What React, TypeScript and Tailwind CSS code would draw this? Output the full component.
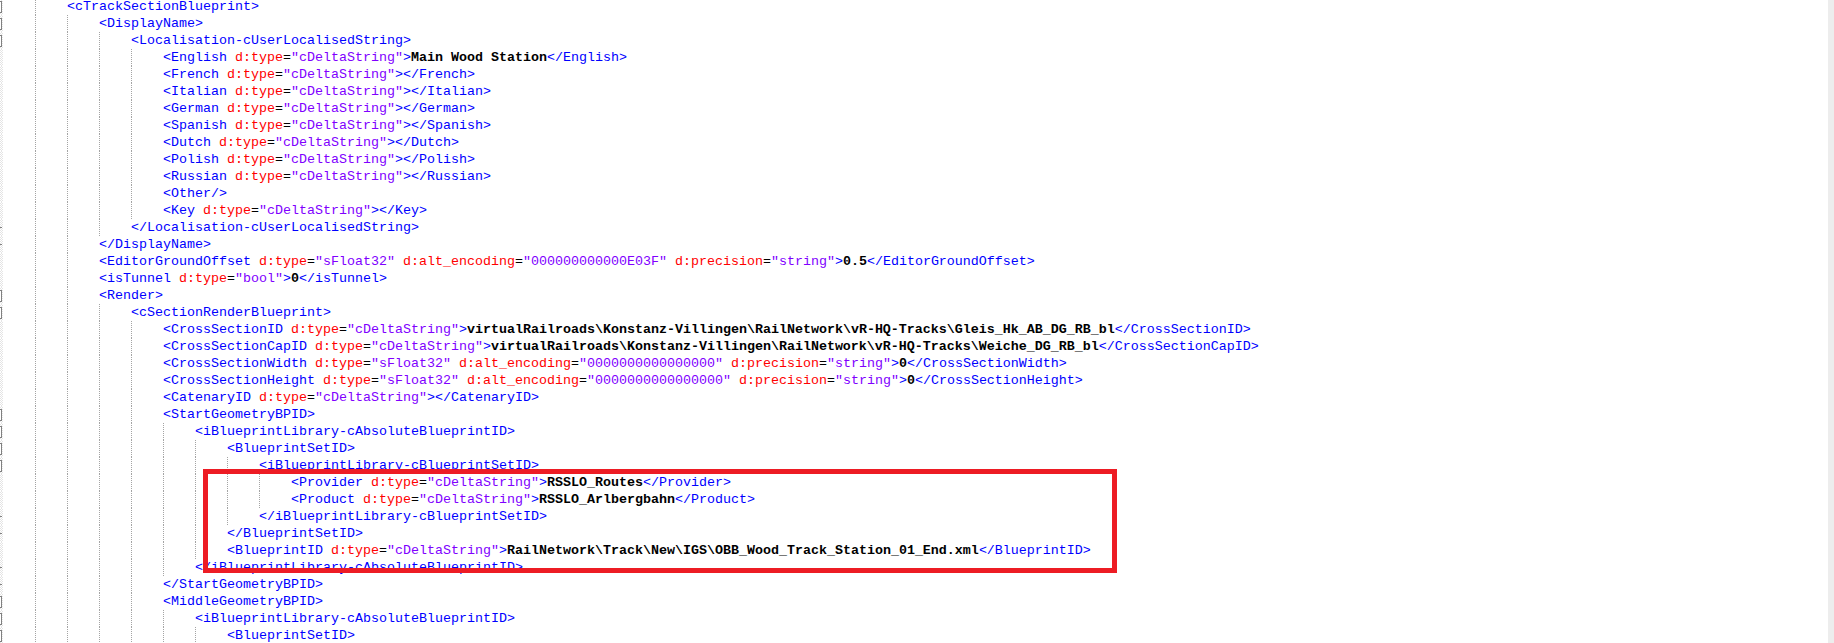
import React from "react";

type Marker = "box" | "tick" | null;
type Kind = "tag" | "attr" | "eq" | "val" | "text" | "sp";

const LINES: [number, string, Marker][] = [
  [2, "<cTrackSectionBlueprint>", "box"],
  [3, "<DisplayName>", "box"],
  [4, "<Localisation-cUserLocalisedString>", "box"],
  [5, '<English d:type="cDeltaString">Main Wood Station</English>', null],
  [5, '<French d:type="cDeltaString"></French>', null],
  [5, '<Italian d:type="cDeltaString"></Italian>', null],
  [5, '<German d:type="cDeltaString"></German>', null],
  [5, '<Spanish d:type="cDeltaString"></Spanish>', null],
  [5, '<Dutch d:type="cDeltaString"></Dutch>', null],
  [5, '<Polish d:type="cDeltaString"></Polish>', null],
  [5, '<Russian d:type="cDeltaString"></Russian>', null],
  [5, "<Other/>", null],
  [5, '<Key d:type="cDeltaString"></Key>', null],
  [4, "</Localisation-cUserLocalisedString>", "tick"],
  [3, "</DisplayName>", "tick"],
  [3, '<EditorGroundOffset d:type="sFloat32" d:alt_encoding="000000000000E03F" d:precision="string">0.5</EditorGroundOffset>', null],
  [3, '<isTunnel d:type="bool">0</isTunnel>', null],
  [3, "<Render>", "box"],
  [4, "<cSectionRenderBlueprint>", "box"],
  [5, '<CrossSectionID d:type="cDeltaString">virtualRailroads\\Konstanz-Villingen\\RailNetwork\\vR-HQ-Tracks\\Gleis_Hk_AB_DG_RB_bl</CrossSectionID>', null],
  [5, '<CrossSectionCapID d:type="cDeltaString">virtualRailroads\\Konstanz-Villingen\\RailNetwork\\vR-HQ-Tracks\\Weiche_DG_RB_bl</CrossSectionCapID>', null],
  [5, '<CrossSectionWidth d:type="sFloat32" d:alt_encoding="0000000000000000" d:precision="string">0</CrossSectionWidth>', null],
  [5, '<CrossSectionHeight d:type="sFloat32" d:alt_encoding="0000000000000000" d:precision="string">0</CrossSectionHeight>', null],
  [5, '<CatenaryID d:type="cDeltaString"></CatenaryID>', null],
  [5, "<StartGeometryBPID>", "box"],
  [6, "<iBlueprintLibrary-cAbsoluteBlueprintID>", "box"],
  [7, "<BlueprintSetID>", "box"],
  [8, "<iBlueprintLibrary-cBlueprintSetID>", "box"],
  [9, '<Provider d:type="cDeltaString">RSSLO_Routes</Provider>', null],
  [9, '<Product d:type="cDeltaString">RSSLO_Arlbergbahn</Product>', null],
  [8, "</iBlueprintLibrary-cBlueprintSetID>", "tick"],
  [7, "</BlueprintSetID>", "tick"],
  [7, '<BlueprintID d:type="cDeltaString">RailNetwork\\Track\\New\\IGS\\OBB_Wood_Track_Station_01_End.xml</BlueprintID>', null],
  [6, "</iBlueprintLibrary-cAbsoluteBlueprintID>", "tick"],
  [5, "</StartGeometryBPID>", "tick"],
  [5, "<MiddleGeometryBPID>", "box"],
  [6, "<iBlueprintLibrary-cAbsoluteBlueprintID>", "box"],
  [7, "<BlueprintSetID>", "box"],
];

const CLS: Record<Kind, string> = {
  tag: "text-[#0000ff]",
  attr: "text-[#ff0000]",
  eq: "text-black",
  val: "text-[#8000ff]",
  text: "text-black font-bold",
  sp: "",
};

function tokenize(s: string): { t: string; k: Kind }[] {
  const out: { t: string; k: Kind }[] = [];
  let i = 0;
  while (i < s.length) {
    if (s[i] === "<") {
      let j = i + 1;
      if (s[j] === "/") j++;
      while (j < s.length && s[j] !== " " && s[j] !== ">" && s[j] !== "/") j++;
      out.push({ t: s.slice(i, j), k: "tag" });
      i = j;
      while (i < s.length) {
        if (s[i] === " ") {
          out.push({ t: " ", k: "sp" });
          i++;
        } else if (s[i] === ">") {
          out.push({ t: ">", k: "tag" });
          i++;
          break;
        } else if (s[i] === "/" && s[i + 1] === ">") {
          out.push({ t: "/>", k: "tag" });
          i += 2;
          break;
        } else {
          let j2 = i;
          while (j2 < s.length && s[j2] !== "=") j2++;
          out.push({ t: s.slice(i, j2), k: "attr" });
          out.push({ t: "=", k: "eq" });
          let j3 = j2 + 2;
          while (j3 < s.length && s[j3] !== '"') j3++;
          out.push({ t: s.slice(j2 + 1, j3 + 1), k: "val" });
          i = j3 + 1;
        }
      }
    } else {
      let j = i;
      while (j < s.length && s[j] !== "<") j++;
      out.push({ t: s.slice(i, j), k: "text" });
      i = j;
    }
  }
  return out;
}

function Line({ level, text, marker }: { level: number; text: string; marker: Marker }) {
  const guides = [];
  for (let k = 1; k < level; k++) {
    guides.push(
      <div key={k} className="w-[32px] h-full shrink-0 border-l border-dotted border-[#a4a4a4]" />
    );
  }
  return (
    <div className="flex h-[17px] items-stretch">
      <div className="relative w-[3px] shrink-0 overflow-hidden bg-[repeating-conic-gradient(#e4e4e4_0%_25%,#ffffff_0%_50%)] bg-[length:2px_2px]">
        {marker === "box" && (
          <div className="absolute left-[-8px] top-[3px] w-[10px] h-[12px] border border-[#808080] bg-white" />
        )}
        {marker === "tick" && <div className="absolute left-0 top-[8px] w-[2px] h-[1px] bg-[#808080]" />}
      </div>
      <div className="w-[32px] shrink-0" />
      {guides}
      <div className="whitespace-pre leading-[17px]">
        {tokenize(text).map((tk, i) => (
          <span key={i} className={CLS[tk.k]}>
            {tk.t}
          </span>
        ))}
      </div>
    </div>
  );
}

export default function App() {
  return (
    <div className="w-[1834px] h-[643px] overflow-hidden bg-white flex font-['Liberation_Mono','Courier_New',monospace] text-[13.333px]">
      <div className="relative flex-1 overflow-hidden">
        <div className="flex flex-col mt-[-2px]">
          {LINES.map(([lvl, txt, m], i) => (
            <Line key={i} level={lvl} text={txt} marker={m} />
          ))}
        </div>
        <div className="absolute left-[203px] top-[469px] w-[914px] h-[104px] border-[5px] border-[#ed1c24]" />
      </div>
      <div className="w-[6px] shrink-0 bg-[#ededed]" />
    </div>
  );
}
